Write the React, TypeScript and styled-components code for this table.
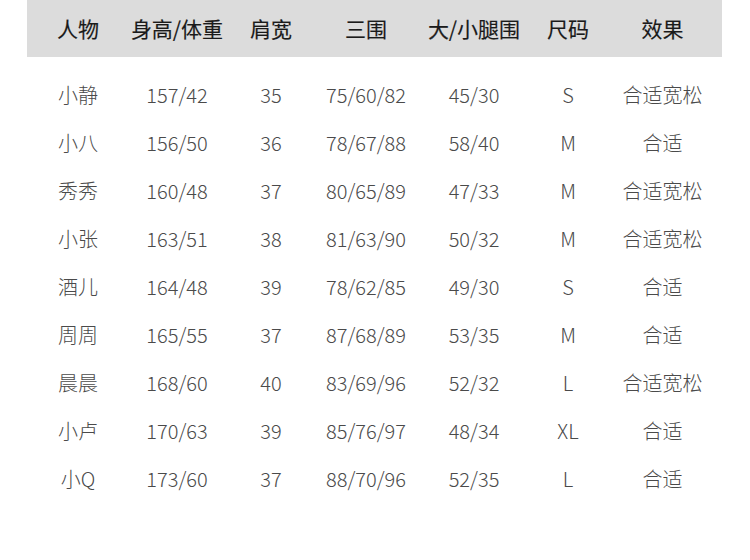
import * as React from 'react';
import styled, { createGlobalStyle } from 'styled-components';

const GlobalStyle = createGlobalStyle`
  html, body {
    margin: 0;
    padding: 0;
    background: #ffffff;
  }
  body {
    font-family: "Noto Sans CJK SC", "Noto Sans", sans-serif;
  }
`;

const COLS = '102px 96px 92px 98px 118px 70px 119px';

const Page = styled.div`
  width: 750px;
  height: 560px;
  padding: 0 28px 0 27px;
  box-sizing: border-box;
`;

const HeaderRow = styled.div`
  display: grid;
  grid-template-columns: ${COLS};
  height: 57px;
  align-items: center;
  background: #dcdcdc;
  margin-bottom: 14px;
`;

const HeadCell = styled.div`
  text-align: center;
  font-size: 21px;
  font-weight: 400;
  color: #1a1a1a;
  line-height: 1;
  padding-top: 0;
  white-space: nowrap;
  -webkit-text-stroke: 0.15px #1a1a1a;
`;

const Row = styled.div`
  display: grid;
  grid-template-columns: ${COLS};
  height: 48px;
  align-items: center;
`;

const Cell = styled.div`
  text-align: center;
  font-size: 20px;
  font-weight: 300;
  color: #4a4a4a;
  line-height: 1;
  white-space: nowrap;
`;

const headers = ['人物', '身高/体重', '肩宽', '三围', '大/小腿围', '尺码', '效果'];

const rows: string[][] = [
  ['小静', '157/42', '35', '75/60/82', '45/30', 'S', '合适宽松'],
  ['小八', '156/50', '36', '78/67/88', '58/40', 'M', '合适'],
  ['秀秀', '160/48', '37', '80/65/89', '47/33', 'M', '合适宽松'],
  ['小张', '163/51', '38', '81/63/90', '50/32', 'M', '合适宽松'],
  ['酒儿', '164/48', '39', '78/62/85', '49/30', 'S', '合适'],
  ['周周', '165/55', '37', '87/68/89', '53/35', 'M', '合适'],
  ['晨晨', '168/60', '40', '83/69/96', '52/32', 'L', '合适宽松'],
  ['小卢', '170/63', '39', '85/76/97', '48/34', 'XL', '合适'],
  ['小Q', '173/60', '37', '88/70/96', '52/35', 'L', '合适'],
];

export default function App() {
  return (
    <>
      <GlobalStyle />
      <Page>
        <HeaderRow>
          {headers.map((h) => (
            <HeadCell key={h}>{h}</HeadCell>
          ))}
        </HeaderRow>
        {rows.map((r) => (
          <Row key={r[0]}>
            {r.map((c, i) => (
              <Cell key={i}>{c}</Cell>
            ))}
          </Row>
        ))}
      </Page>
    </>
  );
}
